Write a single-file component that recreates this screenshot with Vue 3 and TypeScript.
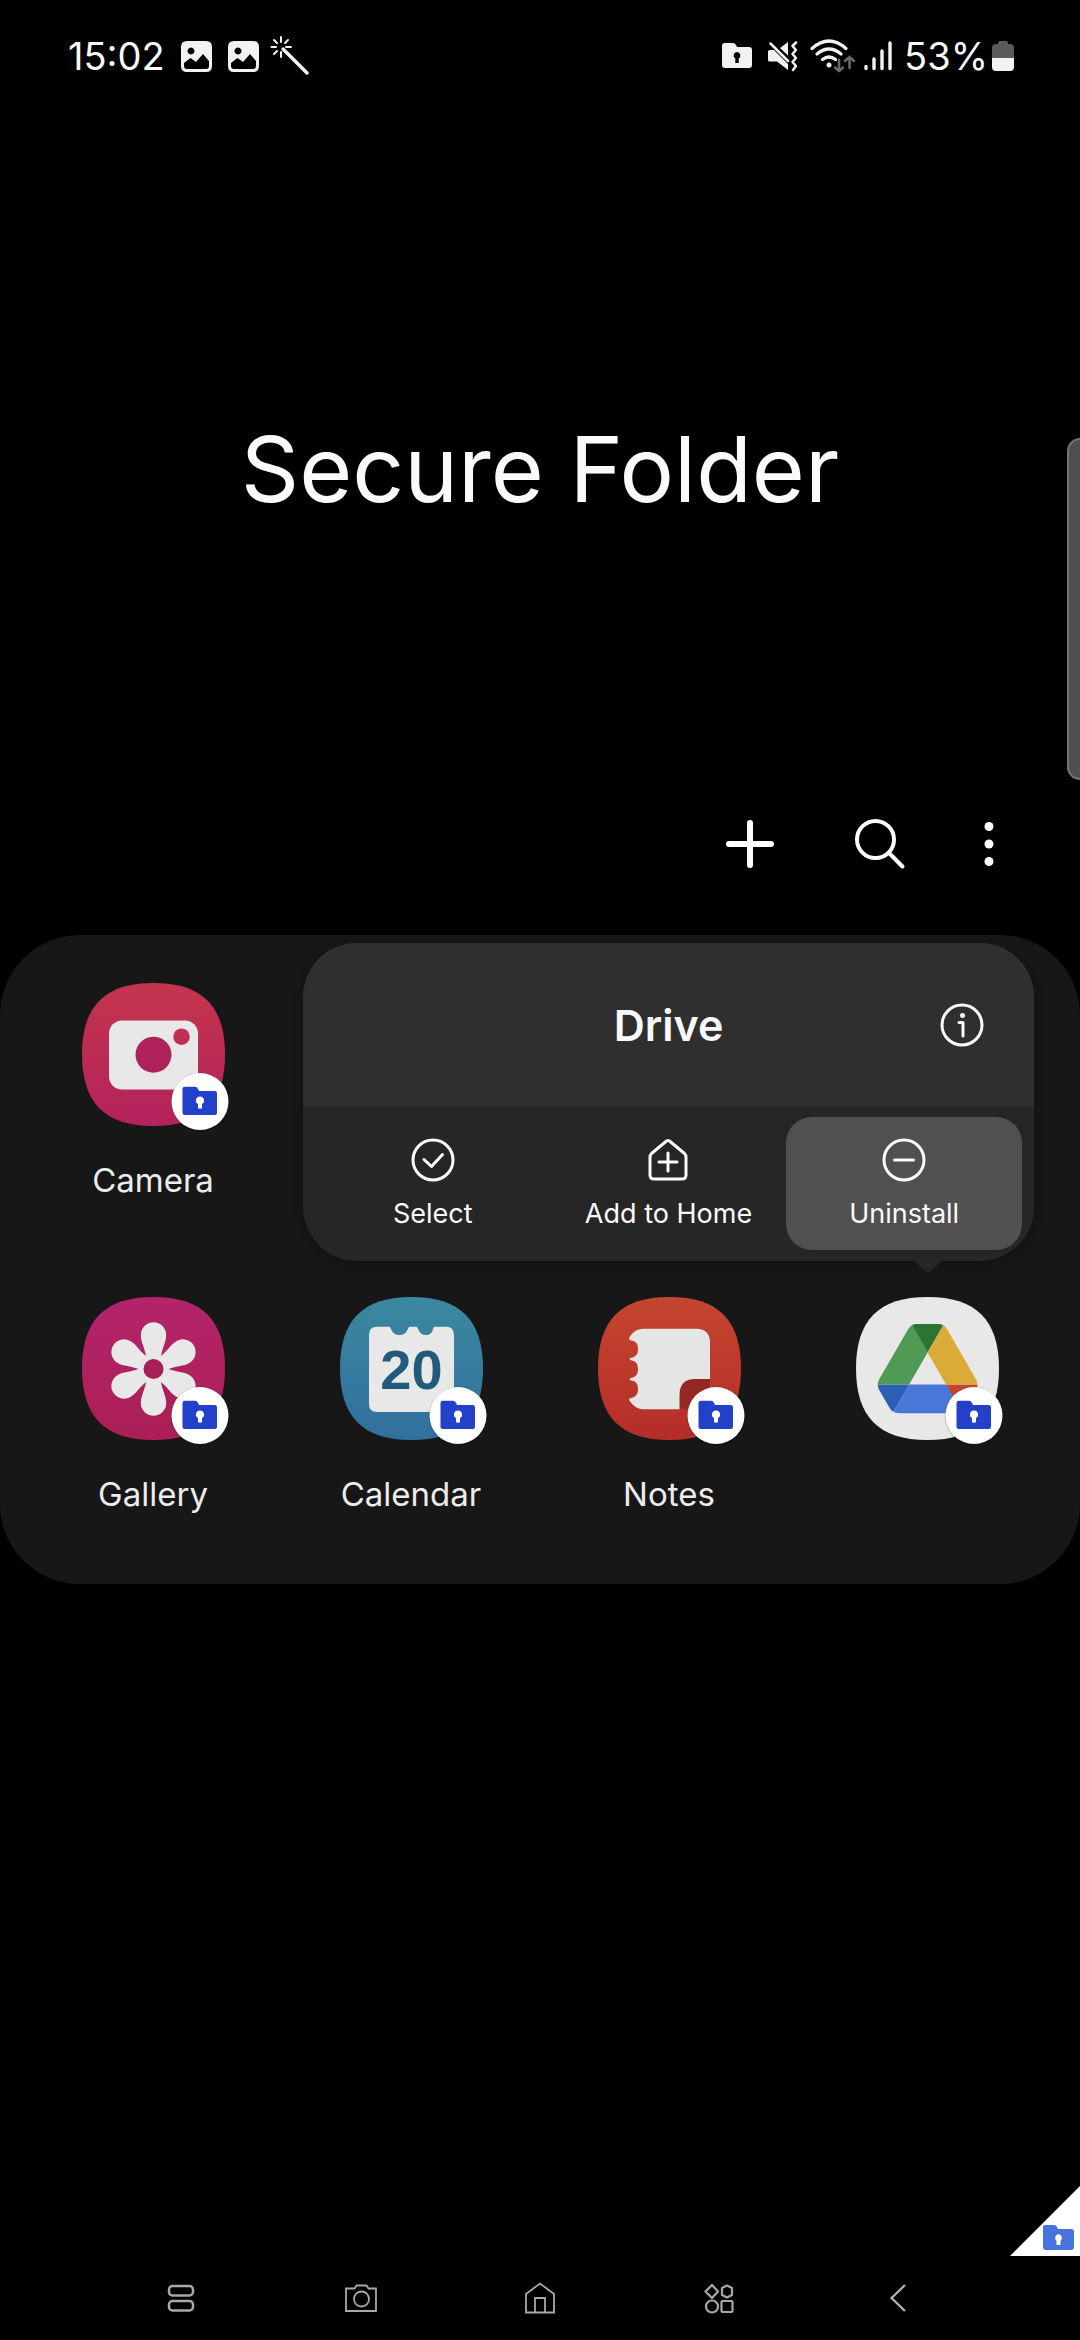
<script setup lang="ts">
type IconName = 'camera' | 'gallery' | 'calendar' | 'notes' | 'drive'

interface AppItem {
  icon: IconName
  name: string
  labelHidden?: boolean
  from: string
  to: string
}

const rows: AppItem[][] = [
  [{ icon: 'camera', name: 'Camera', from: '#c4354c', to: '#b4225c' }],
  [
    { icon: 'gallery', name: 'Gallery', from: '#b3246b', to: '#ab1f54' },
    { icon: 'calendar', name: 'Calendar', from: '#3a89a0', to: '#326f9e' },
    { icon: 'notes', name: 'Notes', from: '#c4462f', to: '#b42d29' },
    { icon: 'drive', name: 'Drive', labelHidden: true, from: '#e8e8e8', to: '#e8e8e8' },
  ],
]

const petals = [0, 60, 120, 180, 240, 300]
</script>

<template>
  <div class="screen">
    <header class="status">
      <div class="status-side">
        <span class="clock">15:02</span>
        <svg v-for="n in 2" :key="n" class="pic" viewBox="0 0 31 31" aria-hidden="true">
          <path fill="#f2f2f2" fill-rule="evenodd" d="M6 0H25Q31 0 31 6V25Q31 31 25 31H6Q0 31 0 25V6Q0 0 6 0ZM10 6.500A3.500 3.500 0 1 0 10.010 6.500ZM3 22V25Q3 28 6 28H25Q28 28 28 25V20L22 13L15 21L9.500 17Z" />
        </svg>
        <svg class="wand" viewBox="0 0 40 40" aria-hidden="true" fill="none" stroke="#f2f2f2" stroke-linecap="round">
          <path stroke-width="3.500" d="M12 13L36 37" />
          <path stroke-width="2" d="M10 1V6M10 16V21M0.500 11H5M15 11H20M3 4L6 7M17 4L14 7M3 18L6 15" />
        </svg>
      </div>
      <div class="status-side">
        <svg class="s-folder" viewBox="0 0 30 26" aria-hidden="true">
          <path fill="#f2f2f2" fill-rule="evenodd" d="M3 0H11Q13 0 14 2L15 4H27Q30 4 30 7V22Q30 25 27 25H3Q0 25 0 22V3Q0 0 3 0ZM15 9A3.500 3.500 0 0 0 13.300 15.500V20H16.700V15.500A3.500 3.500 0 0 0 15 9Z" />
        </svg>
        <svg class="s-mute" viewBox="0 0 30 30" aria-hidden="true">
          <path fill="#f2f2f2" d="M0 10.500Q0 9 2 9H6L20 23V29L9 20.500H2Q0 20.500 0 19ZM12 7L20 1V14.500Z" />
          <path fill="none" stroke="#f2f2f2" stroke-width="2.500" stroke-linecap="round" stroke-linejoin="round" d="M2.500 2.500L20 20M28 1.500L24.500 5L28 9L24.500 13L28 17L24.500 21L28 25L25 29" />
        </svg>
        <svg class="s-wifi" viewBox="0 0 46 34" aria-hidden="true" fill="none" stroke-linecap="round">
          <g stroke="#f2f2f2" stroke-width="3.200">
            <path d="M2 9.500Q19 -5.500 36 9.500" />
            <path d="M7 15Q19 5 31 15" />
            <path d="M12.500 20.500Q19 15.500 25.500 20.500" />
          </g>
          <circle cx="19" cy="26" r="2.500" fill="#f2f2f2" />
          <path stroke="#6a6a6a" stroke-width="2.500" d="M29 21V32M25 28.500L29 32L33 28.500M39.500 29V18M35 22L39.500 18L44 22" />
        </svg>
        <svg class="s-signal" viewBox="0 0 28 30" aria-hidden="true" stroke="#f2f2f2" stroke-width="3.400" stroke-linecap="round">
          <path d="M2 25.500V27.500M10 18V27.500M18 10V27.500M26 2V27.500" />
        </svg>
        <span class="percent">53%</span>
        <svg class="s-battery" viewBox="0 0 22 30" aria-hidden="true">
          <path fill="#5a5a5a" d="M6 3V2Q6 0 8 0H14Q16 0 16 2V3H18Q22 3 22 7V18H0V7Q0 3 4 3Z" />
          <path fill="#f2f2f2" d="M0 17H22V26Q22 30 18 30H4Q0 30 0 26Z" />
        </svg>
      </div>
    </header>

    <h1 class="title">Secure Folder</h1>

    <div class="toolbar">
      <button type="button" aria-label="Add">
        <svg viewBox="0 0 48 48" fill="none" stroke="#fff" stroke-width="6" stroke-linecap="round">
          <path d="M24 3V45M3 24H45" />
        </svg>
      </button>
      <button type="button" aria-label="Search">
        <svg viewBox="0 0 48 48" fill="none" stroke="#fff" stroke-width="4" stroke-linecap="round">
          <circle cx="19.500" cy="19.500" r="18.500" />
          <path d="M33 33L46.500 46.500" />
        </svg>
      </button>
      <button type="button" class="more" aria-label="More options">
        <svg viewBox="0 0 48 48" fill="#fff">
          <circle cx="24" cy="6.500" r="4.500" />
          <circle cx="24" cy="24" r="4.500" />
          <circle cx="24" cy="41.500" r="4.500" />
        </svg>
      </button>
    </div>

    <main class="panel">
      <div v-for="(row, r) in rows" :key="r" class="row">
        <button v-for="app in row" :key="app.icon" type="button" class="app" :aria-label="app.name">
          <svg class="app-icon" viewBox="0 0 143 143" aria-hidden="true">
            <defs>
              <linearGradient :id="'bg-' + app.icon" x1="0" y1="0" x2="0" y2="1">
                <stop offset="0" :stop-color="app.from" />
                <stop offset="1" :stop-color="app.to" />
              </linearGradient>
            </defs>
            <path :fill="`url(#bg-${app.icon})`" d="M0 71.500C0 23 23 0 71.500 0S143 23 143 71.500S120 143 71.500 143S0 120 0 71.500Z" />

            <g v-if="app.icon === 'camera'">
              <rect x="27" y="37.500" width="89" height="69" rx="13" fill="#e8e8e8" />
              <circle cx="71.500" cy="71.700" r="18" fill="#b0235a" />
              <circle cx="99.500" cy="53.700" r="8.300" fill="#be3152" />
            </g>

            <g v-else-if="app.icon === 'gallery'" transform="translate(71.500 72)" fill="#e8e8e8">
              <path v-for="a in petals" :key="a" :transform="`rotate(${a})`" d="M0 0L-7.500 -13C-9 -22 -12.700 -27 -12.700 -34A12.700 12.700 0 0 1 12.700 -34C12.700 -27 9 -22 7.500 -13Z" />
              <circle r="15" />
              <circle r="10" fill="#a81f58" />
            </g>

            <g v-else-if="app.icon === 'calendar'">
              <path fill="#e8e8e8" d="M37 29.700H49C51.500 29.700 51 38 59.500 38S67 29.700 70 29.700H76C79 29.700 78 38 86 38S92 29.700 95 29.700H106Q114 29.700 114 38V107Q114 115 106 115H37Q29 115 29 107V38Q29 29.700 37 29.700Z" />
              <text x="71.500" y="92" class="day" text-anchor="middle">20</text>
            </g>

            <g v-else-if="app.icon === 'notes'">
              <path fill="#942624" d="M112 82H97Q81.500 82 81.500 98V112Q112 112 112 82Z" />
              <path fill="#e4e6e4" d="M46 31.700H98Q112 31.700 112 46V82H97Q81.500 82 81.500 98V112.300H46C38 112.300 34 107 31 103Q31 101 33 101C38 100 40 97 40 92S38 84 33 83.500Q30 82.300 33 81C38 80 40 77 40 72S38 64 33 63.200Q30 62 33 60.800C38 60 40 57 40 52S38 44 33 43.500Q31 43 31 41C34 36 38 31.700 46 31.700Z" />
            </g>

            <g v-else transform="translate(21.700 27) scale(1.143)">
              <path fill="#2b5eb6" d="m6.600 66.850 3.850 6.650c.8 1.400 1.950 2.500 3.300 3.300l13.750-23.800h-27.500c0 1.550.4 3.100 1.200 4.500z" />
              <path fill="#4f9a54" d="m43.650 25-13.750-23.800c-1.350.8-2.500 1.900-3.300 3.300l-25.400 44a9.060 9.060 0 0 0-1.200 4.500h27.500z" />
              <path fill="#c8432f" d="m73.550 76.800c1.350-.8 2.500-1.900 3.300-3.300l1.600-2.750 7.650-13.250c.8-1.400 1.200-2.950 1.200-4.500h-27.500l5.850 11.500z" />
              <path fill="#2d7434" d="m43.650 25 13.750-23.800c-1.350-.8-2.900-1.200-4.500-1.200h-18.500c-1.600 0-3.150.45-4.500 1.200z" />
              <path fill="#4a76d8" d="m59.800 53h-32.300l-13.750 23.800c1.350.8 2.900 1.200 4.500 1.200h50.800c1.600 0 3.150-.45 4.500-1.200z" />
              <path fill="#dbab38" d="m73.400 26.500-12.700-22c-.8-1.400-1.950-2.500-3.300-3.300l-13.750 23.800 16.150 28h27.450c0-1.550-.4-3.100-1.200-4.500z" />
            </g>

            <circle cx="118" cy="119" r="29.500" fill="#000" opacity="0.150" />
            <circle cx="118" cy="118.500" r="28.500" fill="#fff" />
            <path fill="#2340c8" d="M103 103.700H113Q115 103.700 116 106L117 108H132.500Q135 108 135 110.500V129.500Q135 132 132.500 132H103Q100.500 132 100.500 129.500V106Q100.500 103.700 103 103.700Z" />
            <path fill="#fff" d="M118 113.500A4 4 0 0 0 116 121V125.500H120V121A4 4 0 0 0 118 113.500Z" />
          </svg>
          <span v-if="!app.labelHidden" class="app-name">{{ app.name }}</span>
        </button>
      </div>

      <section class="popup" aria-label="Drive">
        <div class="popup-head">
          <h2>Drive</h2>
          <button type="button" class="info" aria-label="App info">
            <svg class="glyph" viewBox="0 0 44 44" fill="none" stroke="#fafafa" stroke-width="3" stroke-linecap="round" stroke-linejoin="round">
              <circle cx="22" cy="22" r="20" />
              <path d="M19 19.500H23V33" />
              <circle cx="22.500" cy="12.500" r="2.500" fill="#fafafa" stroke="none" />
            </svg>
          </button>
        </div>
        <div class="actions">
          <button type="button">
            <svg class="glyph" viewBox="0 0 44 44" fill="none" stroke="#fafafa" stroke-width="3" stroke-linecap="round" stroke-linejoin="round">
              <circle cx="22" cy="22" r="20" />
              <path d="M13 21.500L20.500 28.500L31.500 16.500" />
            </svg>
            <span>Select</span>
          </button>
          <button type="button">
            <svg class="glyph" viewBox="0 0 44 44" fill="none" stroke="#fafafa" stroke-width="3" stroke-linecap="round" stroke-linejoin="round">
              <path d="M20.500 3Q22 2 23.500 3L38.500 15.500Q40 17 40 19V37Q40 41 36 41H8Q4 41 4 37V19Q4 17 5.500 15.500ZM22 15V33M13 24H31" />
            </svg>
            <span>Add to Home</span>
          </button>
          <button type="button" class="active">
            <svg class="glyph" viewBox="0 0 44 44" fill="none" stroke="#fafafa" stroke-width="3" stroke-linecap="round">
              <circle cx="22" cy="22" r="20" />
              <path d="M12.500 22H31.500" />
            </svg>
            <span>Uninstall</span>
          </button>
        </div>
      </section>
    </main>

    <div class="corner">
      <svg viewBox="0 0 70 70" aria-hidden="true">
        <path fill="#fff" d="M0 70L70 0V70Z" />
        <path fill="#4873dc" d="M35 39H44Q46 39 47 41L48 43H61Q64 43 64 46V61Q64 64 61 64H36Q33 64 33 61V41Q33 39 35 39Z" />
        <path fill="#fff" d="M48.500 48A4 4 0 0 0 46.500 55V59H50.500V55A4 4 0 0 0 48.500 48Z" />
      </svg>
    </div>

    <nav class="nav">
      <button type="button" aria-label="Recents">
        <svg viewBox="0 0 32 32" fill="none" stroke="#a8a8a8" stroke-width="2.500">
          <rect x="3" y="4" width="24" height="9.500" rx="3.500" />
          <rect x="3" y="19" width="24" height="9.500" rx="3.500" />
        </svg>
      </button>
      <button type="button" aria-label="Camera shortcut">
        <svg viewBox="0 0 32 32" fill="none" stroke="#a8a8a8" stroke-width="1.800">
          <path d="M1 6.500H9.500L11.500 3.500H21.500L23.500 6.500H31V29H1Z" />
          <circle cx="16.500" cy="17" r="7.500" />
        </svg>
      </button>
      <button type="button" aria-label="Home">
        <svg viewBox="0 0 32 32" fill="none" stroke="#a8a8a8" stroke-width="1.800">
          <path d="M2 12L16 1.500L30 12V30.500H2ZM11 30.500V16H21V30.500" />
        </svg>
      </button>
      <button type="button" aria-label="Apps">
        <svg viewBox="0 0 32 32" fill="none" stroke="#a8a8a8" stroke-width="2.200" stroke-linejoin="round">
          <path d="M9 3L15 9.500L9 16L2.500 9.500ZM24 3.500L29 6V13L24 15.500L19 13V6Z" />
          <circle cx="9" cy="24.500" r="6" />
          <rect x="18.500" y="19" width="11" height="11" rx="1" />
        </svg>
      </button>
      <button type="button" aria-label="Back">
        <svg viewBox="0 0 32 32" fill="none" stroke="#b4b4b4" stroke-width="2.200">
          <path d="M23 3L9.500 16L23 29" />
        </svg>
      </button>
    </nav>

    <div class="edge-handle"></div>
  </div>
</template>

<style>
body {
  background: #000;
}
</style>

<style scoped>
.screen {
  position: relative;
  display: flex;
  flex-direction: column;
  min-height: 100vh;
  overflow: hidden;
  background: #000;
  color: #fafafa;
  font-family: Inter, Roboto, sans-serif;
}

button {
  margin: 0;
  padding: 0;
  border: 0;
  background: none;
  color: inherit;
  font: inherit;
}

svg {
  display: block;
  flex: none;
  overflow: visible;
}

.status {
  display: flex;
  justify-content: space-between;
  height: 112px;
  padding: 0 66px 0 68px;
  font-size: 38px;
  line-height: 48px;
}

.status-side {
  display: flex;
  align-items: center;
  gap: 16px;
}

.pic {
  width: 31px;
  height: 31px;
}

.wand {
  width: 40px;
  height: 40px;
  margin-left: -4px;
}

.s-folder {
  width: 30px;
  height: 26px;
}

.s-mute {
  width: 30px;
  height: 30px;
  margin-right: -4px;
}

.s-wifi {
  width: 46px;
  height: 34px;
  margin-right: -8px;
}

.s-signal {
  width: 28px;
  height: 30px;
  margin-right: -4px;
}

.s-battery {
  width: 22px;
  height: 30px;
  margin-left: -12px;
}

.title {
  margin: 301px 0 271px;
  font-size: 91px;
  font-weight: 400;
  line-height: 112px;
  text-align: center;
}

.toolbar {
  display: flex;
  justify-content: flex-end;
  height: 96px;
  margin-bottom: 43px;
  padding-right: 47px;
}

.toolbar button {
  display: flex;
  align-items: center;
  justify-content: center;
  width: 130px;
}

.toolbar .more {
  width: 88px;
}

.toolbar svg {
  width: 48px;
  height: 48px;
}

.panel {
  position: relative;
  display: flex;
  flex-direction: column;
  gap: 97px;
  padding: 48px 24px 70px;
  border-radius: 80px;
  background: #171717;
}

.row {
  display: grid;
  grid-template-columns: repeat(4, 1fr);
}

.app {
  display: flex;
  flex-direction: column;
  align-items: center;
  gap: 34px;
}

.app-icon {
  width: 143px;
  height: 143px;
}

.day {
  fill: #225a7a;
  font-size: 56px;
  font-weight: 700;
  font-family: "Liberation Sans", Arial, sans-serif;
}

.app-name {
  color: #ececec;
  font-size: 33px;
  line-height: 40px;
}

.popup {
  position: absolute;
  top: 8px;
  right: 46px;
  width: 731px;
  border-radius: 54px;
  background: #262626;
  box-shadow: 0 2px 10px rgba(0, 0, 0, 0.3);
}

.popup::after {
  content: "";
  position: absolute;
  top: 100%;
  right: 92px;
  width: 28px;
  height: 12px;
  background: #262626;
  clip-path: polygon(0 0, 100% 0, 58% 85%, 50% 100%, 42% 85%);
}

.popup-head {
  display: grid;
  grid-template-columns: 1fr auto 1fr;
  align-items: center;
  height: 163px;
  padding: 0 50px;
  border-radius: 54px 54px 0 0;
  background: #2f2f2f;
}

.popup-head h2 {
  grid-column: 2;
  margin: 0;
  font-size: 43px;
  font-weight: 600;
  line-height: 52px;
}

.info {
  justify-self: end;
}

.glyph {
  width: 44px;
  height: 44px;
}

.actions {
  display: grid;
  grid-template-columns: repeat(3, 1fr);
  padding: 11px 12px;
}

.actions button {
  display: flex;
  flex-direction: column;
  align-items: center;
  gap: 16px;
  padding: 21px 0 20px;
  border-radius: 26px;
  font-size: 27px;
  line-height: 32px;
}

.actions .active {
  background: #505050;
}

.corner {
  display: flex;
  flex: 1;
  align-items: flex-end;
  justify-content: flex-end;
}

.corner svg {
  width: 70px;
  height: 70px;
}

.nav {
  display: grid;
  grid-template-columns: repeat(5, 1fr);
  height: 84px;
  padding: 0 92px;
}

.nav button {
  display: flex;
  align-items: center;
  justify-content: center;
}

.nav svg {
  width: 32px;
  height: 32px;
}

.edge-handle {
  position: absolute;
  top: 438px;
  right: -13px;
  width: 22px;
  height: 338px;
  border: 2px solid #757575;
  border-radius: 14px;
  background: #4f4f4f;
}
</style>
